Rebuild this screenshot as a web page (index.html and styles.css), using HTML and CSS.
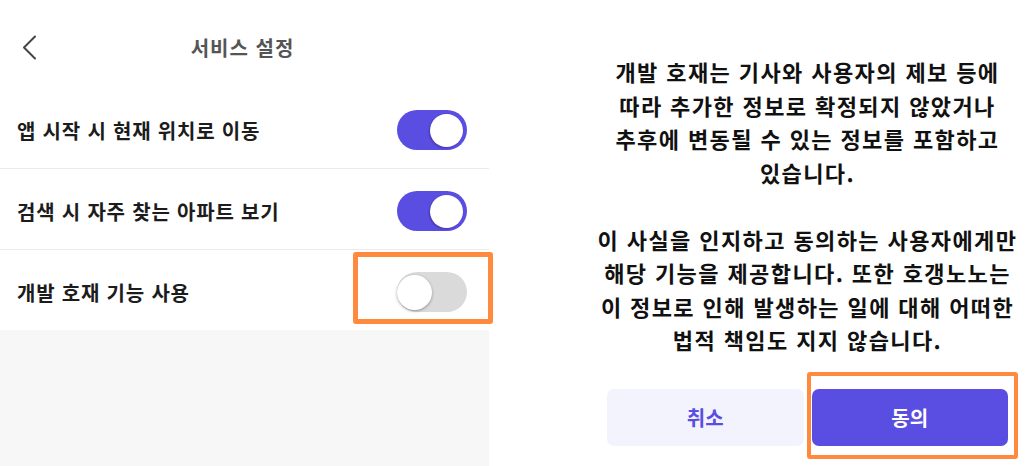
FILE: index.html
```html
<!DOCTYPE html>
<html lang="ko">
<head>
  <meta charset="UTF-8" />
  <title>서비스 설정</title>
  <meta name="viewport" content="width=device-width, initial-scale=1" />
  <link rel="stylesheet" href="styles.css">
</head>
<body>

  <!-- Settings screen -->
  <div class="settings">
    <div class="header">
      <button class="back" aria-label="뒤로">
        <svg width="15" height="25" viewBox="0 0 15 25">
          <path d="M13 1.5 L2 12.5 L13 23.5" fill="none" stroke="#444" stroke-width="2" stroke-linecap="round" stroke-linejoin="round" />
        </svg>
      </button>
      <h1>서비스 설정</h1>
    </div>

    <div class="row">
      <span>앱 시작 시 현재 위치로 이동</span>
      <div class="switch on"><div class="knob"></div></div>
    </div>
    <div class="row">
      <span>검색 시 자주 찾는 아파트 보기</span>
      <div class="switch on"><div class="knob"></div></div>
    </div>
    <div class="row last">
      <span>개발 호재 기능 사용</span>
      <div class="switch">
        <div class="knob"></div>
        <div class="mark mark-switch"></div>
      </div>
    </div>

    <div class="rest"></div>
  </div>

  <!-- Consent dialog -->
  <div class="side">
    <div class="dialog">
      <p>
        개발 호재는 기사와 사용자의 제보 등에<br>
        따라 추가한 정보로 확정되지 않았거나<br>
        추후에 변동될 수 있는 정보를 포함하고<br>
        있습니다.
      </p>
      <p>
        이 사실을 인지하고 동의하는 사용자에게만<br>
        해당 기능을 제공합니다. 또한 호갱노노는<br>
        이 정보로 인해 발생하는 일에 대해 어떠한<br>
        법적 책임도 지지 않습니다.
      </p>
      <div class="buttons">
        <button class="btn cancel">취소</button>
        <button class="btn agree">
          동의
          <span class="mark mark-agree"></span>
        </button>
      </div>
    </div>
  </div>

</body>
</html>
```

FILE: styles.css
```css
* {
  margin: 0;
  padding: 0;
  box-sizing: border-box;
}

body, html {
  height: 100%;
  font-family: "Noto Sans CJK KR", "Noto Sans", sans-serif;
  background: #fff;
  overflow: hidden;
}

body {
  display: flex;
}

.settings {
  width: 489px;
  display: flex;
  flex-direction: column;
}

.header {
  height: 88px;
  padding-top: 6px;
  display: grid;
  grid-template-columns: 1fr auto 1fr;
  align-items: center;
}

.back {
  justify-self: start;
  margin-left: 22px;
  background: none;
  border: none;
  display: flex;
}

h1 {
  font-size: 20px;
  font-weight: 700;
  letter-spacing: 1px;
  color: #555;
  margin-left: -4px;
}

.row {
  height: 81px;
  padding: 4px 22px 0 17px;
  display: flex;
  align-items: center;
  justify-content: space-between;
  border-bottom: 1px solid #ebebeb;
  font-size: 20px;
  font-weight: 700;
  letter-spacing: 0.8px;
  color: #1c1c1c;
}

.row.last {
  height: 80px;
  border-bottom: none;
}

.switch {
  position: relative;
  width: 70px;
  height: 40px;
  border-radius: 20px;
  background: #dadada;
  display: flex;
  align-items: center;
}

.switch .knob {
  width: 35px;
  height: 35px;
  border-radius: 50%;
  background: #fff;
  box-shadow: 0 1px 3px rgba(0, 0, 0, 0.35);
}

.switch.on {
  background: #5a4de2;
  justify-content: flex-end;
  padding-right: 4px;
}

.switch.on .knob {
  width: 33px;
  height: 33px;
  box-shadow: -1px 1px 2px rgba(0, 0, 0, 0.25);
}

.rest {
  flex: 1;
  background: #f7f7f7;
}

/* orange highlight boxes */
.mark {
  position: absolute;
  border: 5px solid #ff8a3d;
  border-radius: 3px;
  pointer-events: none;
}

.mark-switch {
  left: -44px;
  top: -20px;
  width: 140px;
  height: 72px;
}

.mark-agree {
  left: -5px;
  top: -17px;
  width: 211px;
  height: 87px;
  border-width: 4px;
}

.side {
  flex: 1;
  padding-left: 96px;
}

.dialog {
  width: 445px;
  padding: 55px 22px 0 22px;
  text-align: center;
}

.dialog p {
  font-size: 22px;
  font-weight: 700;
  letter-spacing: 1.4px;
  line-height: 33.5px;
  white-space: nowrap;
  color: #111;
  margin: 0 -20px 33.5px -20px;
}

.dialog p:last-of-type {
  margin-bottom: 0;
}

.buttons {
  display: flex;
  gap: 8px;
  margin-top: 32px;
}

.btn {
  position: relative;
  flex: 1;
  height: 57px;
  border: none;
  border-radius: 7px;
  font-family: inherit;
  font-size: 20px;
  font-weight: 700;
}

.cancel {
  background: #f3f3fd;
  color: #5a4de2;
}

.agree {
  background: #5a4de2;
  color: #fff;
}
```
